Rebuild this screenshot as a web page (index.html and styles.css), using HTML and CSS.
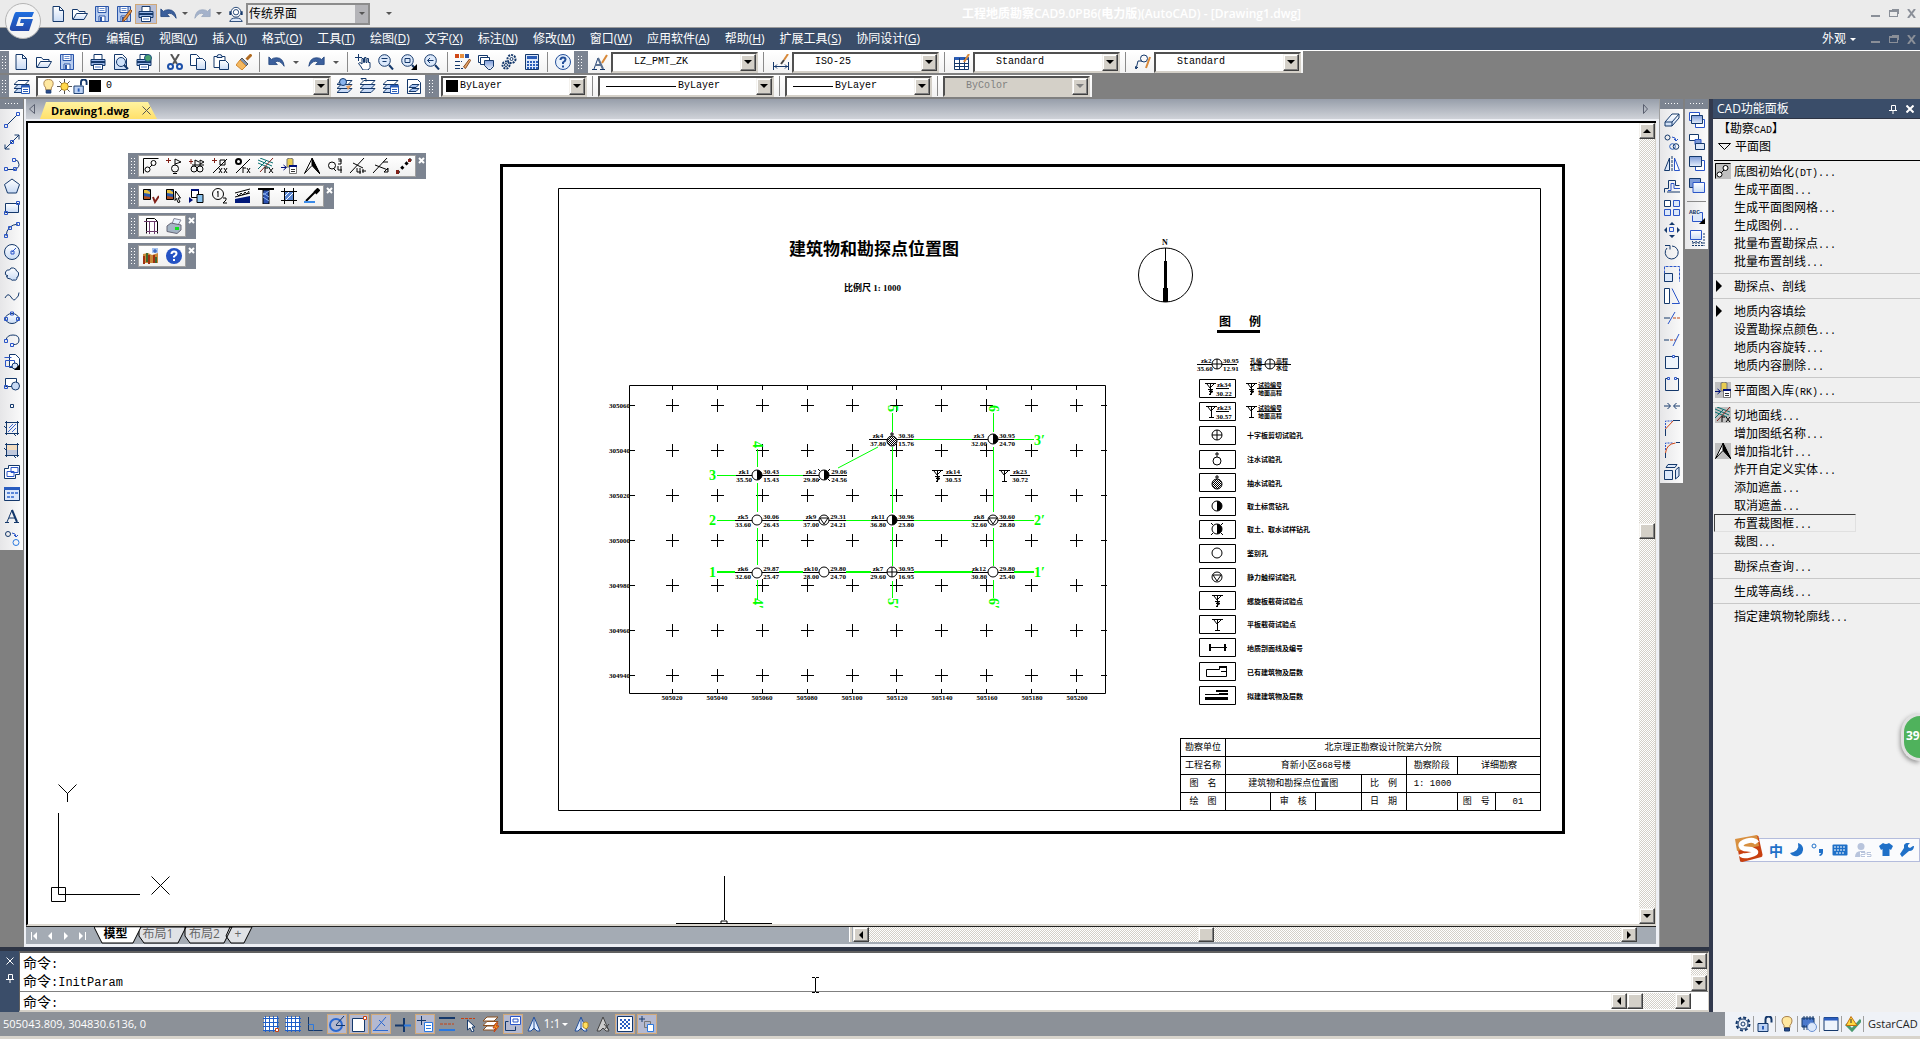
FILE: index.html
```html
<!DOCTYPE html>
<html lang="zh-CN">
<head>
<meta charset="utf-8">
<title>工程地质勘察CAD9.0PB6(电力版)(AutoCAD) - [Drawing1.dwg]</title>
<link rel="stylesheet" href="styles.css">
</head>
<body>
<svg class="defs" aria-hidden="true">
<defs>
<linearGradient id="lb" x1="0" y1="0" x2="0" y2="1"><stop offset="0" stop-color="#fff"/><stop offset="1" stop-color="#c9dbf5"/></linearGradient>
<linearGradient id="db" x1="0" y1="0" x2="0" y2="1"><stop offset="0" stop-color="#7d9bd8"/><stop offset="1" stop-color="#e8f0fc"/></linearGradient>
<linearGradient id="gg" x1="0" y1="0" x2="0" y2="1"><stop offset="0" stop-color="#1f6fe0"/><stop offset="1" stop-color="#2348a8"/></linearGradient>
<pattern id="hatch" width="2" height="2" patternUnits="userSpaceOnUse"><path d="M0 0h1v1h-1zM1 1h1v1h-1z" fill="#000" stroke="none"/></pattern>
</defs>
<!-- file and edit -->
<symbol id="new" viewBox="0 0 16 16"><path d="M3 .5h6.500l4 4v11h-10.500z" fill="url(#lb)"/><path d="M9.500 .5v4h4"/></symbol>
<symbol id="open" viewBox="0 0 16 16"><path d="M.5 13.500v-10h5l1.500 2h6v2" fill="#fff"/><path d="M1 13.500l3.500-6h11l-3.500 6z" fill="url(#lb)"/></symbol>
<symbol id="save" viewBox="0 0 16 16"><path d="M1.500 .5h13v15h-13z" fill="#b8cdf0" stroke="#2a55a8"/><path d="M4 .5h8v6h-8z" fill="#fff" stroke="#2a55a8"/><path d="M5.500 2.500h5M5.500 4.500h5" stroke="#6a8fd0"/><path d="M5 10h6v5.500h-6z" fill="#fff" stroke="#2a55a8"/><path d="M6 11h2v4h-2z" fill="#2a55a8" stroke="none"/></symbol>
<symbol id="saveas" viewBox="0 0 16 16"><use href="#save"/><path d="M14.500 3.500l-7 9-1 3 3-1.500 6.500-9z" fill="#e89a48" stroke="#8a4a20"/></symbol>
<symbol id="print" viewBox="0 0 16 16"><path d="M4 5.500v-5h8v5" fill="#fff"/><path d="M1 5.500h14v6h-14z" fill="#9ab6e6" /><path d="M1 8h14" stroke-width="2"/><path d="M3.500 10.500h9v5h-9z" fill="#fff"/><path d="M5 13h6" stroke="#4a78c8"/></symbol>
<symbol id="print2" viewBox="0 0 16 16"><use href="#print"/><circle cx="12" cy="4" r="3.500" fill="#48a070" stroke="#205080"/></symbol>
<symbol id="preview" viewBox="0 0 16 16"><path d="M1.500 .5h8l4 4v11h-12z" fill="url(#lb)"/><circle cx="8" cy="8" r="4.500" fill="#cfe2fa"/><path d="M11 11l4 4" stroke-width="2"/></symbol>
<symbol id="undo" viewBox="0 0 20 14"><path d="M1 1v9h10l-3-3q6-3 11 5q-1-10-9-10q-4 0-6 2z" fill="#3b5f9c" stroke="#24477f"/></symbol>
<symbol id="redo" viewBox="0 0 20 14"><path d="M19 1v9h-10l3-3q-6-3-11 5q1-10 9-10q4 0 6 2z" fill="#3b5f9c" stroke="#24477f"/></symbol>
<symbol id="user" viewBox="0 0 18 18"><circle cx="9" cy="7" r="5.500" fill="#fff"/><circle cx="9" cy="7" r="3" /><path d="M2 17.500q1-4 7-4t7 4z" fill="#dce8fa"/><path d="M2.500 6v4M15.500 6v4" stroke-width="2"/></symbol>
<symbol id="cut" viewBox="0 0 16 16"><path d="M4 0l6 10M12 0l-6 10" stroke="#555" stroke-width="2"/><circle cx="3.500" cy="12.500" r="2.500" stroke-width="2" stroke="#1c4fa8"/><circle cx="12.500" cy="12.500" r="2.500" stroke-width="2" stroke="#1c4fa8"/></symbol>
<symbol id="copy" viewBox="0 0 16 16"><path d="M.5 .5h6l3 3v8h-9z" fill="#fff"/><path d="M6.500 4.500h6l3 3v8h-9z" fill="url(#lb)"/></symbol>
<symbol id="paste" viewBox="0 0 16 16"><path d="M1 2.500h11v11h-11z" fill="#fff"/><path d="M4 2.500q0-2 2.500-2t2.500 2v1h-5z" fill="#dce8fa"/><path d="M6.500 6.500h6l3 3v6h-9z" fill="url(#lb)"/></symbol>
<symbol id="brush" viewBox="0 0 16 16"><path d="M15.500 .5l-5 5" stroke="#b06a20" stroke-width="3"/><path d="M6 4l6 6-2 2-6-6z" fill="#8090a8" stroke="#555"/><path d="M4 6l6 6-4 4-6-5z" fill="#f4b860" stroke="#d08830"/></symbol>
<symbol id="pan" viewBox="0 0 16 16"><path d="M3.500 0v7M0 3.500h7" stroke-width="1"/><path d="M5.500 12l-2-2.500 1.500-1 2 1.500v-5.500h1.500v4h1v-5h1.500v5h1v-4h1.500v4h1.500v5l-2 2.500h-5z" fill="#fff"/></symbol>
<symbol id="zoom" viewBox="0 0 16 16"><circle cx="6.500" cy="6.500" r="5.800" fill="#dce9fb"/><path d="M11 11l4 4.500" stroke-width="2"/></symbol>
<symbol id="zoomrt" viewBox="0 0 16 16"><use href="#zoom"/><path d="M3.500 4.500h6M4.500 7.500h4" /></symbol>
<symbol id="zoomwin" viewBox="0 0 16 16"><use href="#zoom"/><path d="M4 4.500h5v4h-5z"/><path d="M16 10v6h-6z" fill="#000" stroke="none"/></symbol>
<symbol id="zoomprev" viewBox="0 0 16 16"><use href="#zoom"/><path d="M9.500 6.500h-6M6 4l-2.500 2.500 2.500 2.500"/></symbol>
<symbol id="props" viewBox="0 0 16 16"><path d="M0 0h4v4h-4z" fill="#d04818" stroke="none"/><path d="M5 0h4v4h-4z" fill="#e89040" stroke="none"/><path d="M10 0h4v4h-4z" fill="#2850a0" stroke="none"/><path d="M0 7.500h7M0 11.500h6M0 14.500h8" stroke-dasharray="5 1"/><path d="M14.500 5l-6 8 2 1.500 5-8z" fill="#e8a868" stroke="#8a4a20"/></symbol>
<symbol id="sheets" viewBox="0 0 16 16"><path d="M.5 8.500v-7h9v7z" fill="#fff"/><path d="M2.500 10.500v-7h9v7z" fill="#fff"/><path d="M6.500 6.500h9v6l-3 3h-2l-4-4z" fill="url(#db)"/></symbol>
<symbol id="gears" viewBox="0 0 16 16"><circle cx="10.500" cy="5" r="4" stroke-width="2" stroke-dasharray="2 1"/><circle cx="10.500" cy="5" r="1.500"/><circle cx="5" cy="11" r="3.500" stroke-width="2" stroke-dasharray="2 1"/><circle cx="5" cy="11" r="1.500"/></symbol>
<symbol id="calc" viewBox="0 0 16 16"><path d="M1.500 .5h13v15h-13z" fill="#dce8fa"/><path d="M3 2h10v3h-10z" fill="#2a5db8" stroke="none"/><path d="M4 7v8M7 7v8M10 7v8M13 7v8" stroke-dasharray="2 1" stroke-width="2" stroke="#2a5db8"/></symbol>
<symbol id="help" viewBox="0 0 16 16"><circle cx="8" cy="8" r="7.500" fill="#e6f0fc" stroke="#24509a"/><path d="M5.500 6q0-2.500 2.500-2.500t2.500 2q0 1.500-2.500 3v1.500M8 11.500v2" stroke="#24509a" stroke-width="2"/></symbol>
<symbol id="styleA" viewBox="0 0 16 16"><path d="M2 15l4-11 5 11" stroke="#1c3f77"/><path d="M6 4l5 11M3 11h6" stroke="#5a7090" stroke-width="2"/><path d="M0 15.500h5M8 15.500h5"/><path d="M15 1l-5 8" stroke="#d88838" stroke-width="2"/></symbol>
<symbol id="styleD" viewBox="0 0 16 16"><path d="M.5 8v8M15.500 8v8M1 12.500h14M4 10.500l-2 2 2 2M12 10.500l2 2-2 2"/><path d="M15 0l-4 6" stroke="#d88838" stroke-width="2"/><path d="M11 6l-3 4" stroke="#444" stroke-width="2"/></symbol>
<symbol id="styleT" viewBox="0 0 16 16"><path d="M.5 3.500h14v12h-14z" fill="#fff"/><path d="M.5 4.500h14" stroke="#2a5db8" stroke-width="3"/><path d="M.5 9.500h14M.5 12.500h14M5.500 4v11M10.500 4v11"/><path d="M15 0l-5 8" stroke="#d88838" stroke-width="2"/></symbol>
<symbol id="styleM" viewBox="0 0 16 16"><path d="M1 15l2-8h4M1 15l-1-3M1 15l2-2"/><circle cx="9" cy="4.500" r="3.500"/><path d="M15 3l-4 11" stroke="#d88838" stroke-width="2"/></symbol>
<symbol id="layers" viewBox="0 0 16 16"><path d="M0 14.500l4-4h11l-4 4zM0 10.500l4-4h11l-4 4z" fill="#c8daf6"/><path d="M0 6.500l4-4h11l-4 4z" fill="#fff"/></symbol>
<symbol id="layermgr" viewBox="0 0 16 16"><use href="#layers"/><path d="M7.500 7.500h8v8h-8z" fill="#fff" stroke="#2a5db8"/><path d="M8 8.500h7" stroke="#2a5db8" stroke-width="2"/><path d="M9 11.500h5M9 13.500h5" stroke="#2a5db8"/></symbol>
<symbol id="layercur" viewBox="0 0 16 16"><use href="#layers"/><circle cx="6" cy="4" r="3.500" fill="#8ab4ee"/><path d="M9 8l6-1-4 5z" fill="#e8a060" stroke="none"/></symbol>
<symbol id="layerprev" viewBox="0 0 16 16"><use href="#layers"/><path d="M1 .5h5v3M1 .5l2 2"/></symbol>
<symbol id="layerstate" viewBox="0 0 16 16"><path d="M1.500 1.500h10l3 3v11h-13z" fill="#fff"/><path d="M3 9.500l3-3h7l-3 3zM3 13.500l3-3h7l-3 3z" fill="#a8c4f0"/></symbol>
<symbol id="bulb" viewBox="0 0 16 16"><path d="M8 .5q5 0 5 4.500 0 2-2 4.500v2h-6v-2q-2-2.500-2-4.500 0-4.500 5-4.500z" fill="#ffe8a0" stroke="#a8804a"/><path d="M5.500 12h5v3h-5z" fill="#2a4a90"/></symbol>
<symbol id="sun" viewBox="0 0 16 16"><path d="M8 0v16M0 8h16M2.500 2.500l11 11M13.500 2.500l-11 11" stroke="#444"/><circle cx="8" cy="8" r="4" fill="#ffd84a" stroke="#b88a20"/></symbol>
<symbol id="unlock" viewBox="0 0 16 16"><path d="M1 7.500h10v8h-10z" fill="#bcd2f4"/><path d="M8.500 7v-3.500q0-3 3-3t3 3v3" stroke-width="2"/><path d="M6 10v3.500" stroke-width="2" stroke="#2a5db8"/></symbol>
<!-- draw -->
<symbol id="d1" viewBox="0 0 16 16"><path d="M3 13l10-10"/><path d="M.5 12.500h3v3h-3zM12.500 .5h3v3h-3z" class="b"/></symbol>
<symbol id="d2" viewBox="0 0 16 16"><path d="M1 15l14-14M10.500 1h4.500v4.500M1 10.500v4.500h4.500"/><path d="M6.500 6.500h3v3h-3z" class="b"/></symbol>
<symbol id="d3" viewBox="0 0 16 16"><path d="M3 13.500h7q5-1 5-5t-4-5"/><path d="M.5 11.500h3v3h-3zM9.500 11.500h3v3h-3zM8.500 2.500h3v3h-3z" class="b"/></symbol>
<symbol id="d4" viewBox="0 0 16 16"><path d="M8 1l7.500 5.500-3 8.500h-9l-3-8.500z" fill="url(#lb)"/></symbol>
<symbol id="d5" viewBox="0 0 16 16"><path d="M1.500 3.500h13v9h-13z" fill="url(#lb)"/><path d="M.5 11.500h3v3h-3zM12.500 1.500h3v3h-3z" class="b"/></symbol>
<symbol id="d6" viewBox="0 0 16 16"><path d="M2 14q1-11 12-12"/><path d="M.5 12.500h3v3h-3zM4.500 4.500h3v3h-3zM12.500 .5h3v3h-3z" class="b"/></symbol>
<symbol id="d7" viewBox="0 0 16 16"><circle cx="8" cy="8" r="7.500" fill="url(#lb)"/><path d="M8 8l4-4M7 7h3v3h-3z" class="b"/></symbol>
<symbol id="d8" viewBox="0 0 16 16"><path d="M4 10q-4-1-2.500-4t4-2q1-3 4-2t3 3q3 1 2 4t-1.500 2q0 4-3 3-2 1-3.500-1-4 0-4-3z" fill="url(#lb)"/></symbol>
<symbol id="d9" viewBox="0 0 16 16"><path d="M1 10q3-6 6-1t5 1.500q3-2 3-6"/></symbol>
<symbol id="d10" viewBox="0 0 16 16"><ellipse cx="8" cy="8.500" rx="6.500" ry="5" fill="url(#lb)"/><path d="M.5 7.500h3v3h-3zM12.500 7.500h3v3h-3zM6.500 2h3v3h-3z" class="b"/></symbol>
<symbol id="d11" viewBox="0 0 16 16"><path d="M2 8q1-5 7-5t6 5-6 4.500"/><path d="M.5 7.500h3v3h-3zM6.500 11.500h3v3h-3z" class="b"/></symbol>
<symbol id="d12" viewBox="0 0 16 16"><path d="M5.500 .5h6l4 4v9h-10z" fill="#fff"/><path d="M1.500 6.500h9v6h-9z" class="b"/><circle cx="11" cy="12" r="3" fill="#dce8fa"/><path d="M.5 3.500h7" class="b"/><path d="M16 10v6h-6z" fill="#000" stroke="none"/></symbol>
<symbol id="d13" viewBox="0 0 16 16"><path d="M1.500 2.500h11v8h-11z" fill="#fff"/><circle cx="11.500" cy="10" r="4" fill="#c9dbf5"/><path d="M.5 9.500h3v3h-3z" class="b"/></symbol>
<symbol id="d14" viewBox="0 0 16 16"><path d="M6.500 6.500h3v3h-3z" fill="#fff"/></symbol>
<symbol id="d15" viewBox="0 0 16 16"><path d="M2.500 1v14M13.500 1v14M1 2.500h14M1 13.500h14M0 6l3 3M9 13l3 3"/><path d="M5 8l4-4M4 12l8-8M8 12l4-4" stroke="#3a66d0"/></symbol>
<symbol id="d16" viewBox="0 0 16 16"><path d="M3 3h10v5h-10z" fill="#f2dcc0" stroke="none"/><path d="M3 8h10v5h-10z" fill="#c0c8dc" stroke="none"/><path d="M2.500 1v14M13.500 1v14M1 2.500h14M1 13.500h14M0 6l3 3M9 13l3 3"/></symbol>
<symbol id="d17" viewBox="0 0 16 16"><path d="M.5 4.500h4v-3h11v9h-4v4h-11z" fill="#fff"/><path d="M3 7.500h7v5h-7zM7 3.500h7v5h-7z" class="b"/></symbol>
<symbol id="d18" viewBox="0 0 16 16"><path d="M.5 1.500h15v13h-15z" fill="#dce8fa"/><path d="M0 2.500h16" stroke="#2a5dc0" stroke-width="3"/><path d="M3 6h3v2h-3zM7 6h3v2h-3zM11 6h3v2h-3zM3 10h3v2h-3zM7 10h3v2h-3z" fill="#5a86d8" stroke="none"/></symbol>
<symbol id="d19" viewBox="0 0 16 16"><path d="M3 14l5-12"/><path d="M8 2l5 12" stroke-width="2"/><path d="M5 10h6M1 14.500h4M10 14.500h5"/></symbol>
<symbol id="d20" viewBox="0 0 16 16"><circle cx="4" cy="4" r="2.500"/><circle cx="12" cy="12.500" r="3" stroke="#2a7ae0"/><path d="M8 3q4 0 4 4M10 5l2 2 2-2" class="b"/></symbol>
<!-- modify -->
<symbol id="m1" viewBox="0 0 16 16"><path d="M1 10l7-8h7v4l-7 8h-7z" fill="url(#lb)"/><path d="M1 10h7l7-8M8 10v4"/></symbol>
<symbol id="m2" viewBox="0 0 16 16"><circle cx="3.500" cy="3.500" r="2.500"/><circle cx="8.500" cy="12.500" r="2.800" stroke="#2a5db8"/><circle cx="12" cy="12.500" r="2.800"/><path d="M8 3q4 0 4 4M10 5l2 2 2-2" class="b"/></symbol>
<symbol id="m3" viewBox="0 0 16 16"><path d="M5.500 2v12.500h-5z" fill="#dce8fa"/><path d="M10.500 2v12.500h5z" fill="#fff" class="b"/><path d="M8 0v16" stroke-dasharray="3 1"/></symbol>
<symbol id="m4" viewBox="0 0 16 16"><path d="M.5 14.500v-4h4v-8h7v5h4M3 14h13" /><path d="M4 12.500h3v-7h3v5h6" class="b"/></symbol>
<symbol id="m5" viewBox="0 0 16 16"><path d="M.5 .5h6v6h-6z" fill="#fff"/><path d="M9.500 .5h6v6h-6zM.5 9.500h6v6h-6zM9.500 9.500h6v6h-6z" fill="#dce8fa" class="b"/></symbol>
<symbol id="m6" viewBox="0 0 16 16"><path d="M5.500 5.500h4v4h-4z" class="b"/><path d="M8 0l3 3h-6zM8 16l3-3h-6zM0 8l3-3v6zM16 8l-3-3v6z" fill="#14386b" stroke="none"/></symbol>
<symbol id="m7" viewBox="0 0 16 16"><path d="M3 4a6.500 6.500 0 1 0 5-2"/><path d="M1 1.500h5v4"/></symbol>
<symbol id="m8" viewBox="0 0 16 16"><path d="M.5 15.500v-15h15v15" class="b" stroke-dasharray="3 1"/><path d="M.5 7.500h8v8h-8z" fill="#dce8fa"/></symbol>
<symbol id="m9" viewBox="0 0 16 16"><path d="M.5 .5h5v15h-5z" fill="#fff"/><path d="M8 .5l7.500 15h-7.500" class="b"/></symbol>
<symbol id="m10" viewBox="0 0 16 16"><path d="M0 8h6"/><path d="M9 8h7" stroke="#c04818" stroke-dasharray="3 1"/><path d="M4 14l7-12" class="b"/></symbol>
<symbol id="m11" viewBox="0 0 16 16"><path d="M0 8h5"/><path d="M6 8h6" stroke="#c04818" stroke-dasharray="3 1"/><path d="M9 14l6-12" class="b"/></symbol>
<symbol id="m12" viewBox="0 0 16 16"><path d="M1.500 2.500h13v12h-13z" fill="#eef4fc"/><path d="M8.500 1.500h2v2h-2z" fill="#fff" class="b"/></symbol>
<symbol id="m13" viewBox="0 0 16 16"><path d="M4 2.500h-2.500v12h13v-12h-2.500"/><path d="M3.500 1.500h2v2h-2zM10.500 1.500h2v2h-2z" class="b"/></symbol>
<symbol id="m14" viewBox="0 0 16 16"><path d="M0 8h6M3.500 5l3 3-3 3M16 8h-6M12.500 5l-3 3 3 3"/></symbol>
<symbol id="m15" viewBox="0 0 16 16"><path d="M1.500 8v-7h7" class="b" stroke-dasharray="2 1"/><path d="M1.500 16v-7M9 .5h7"/><path d="M1.500 9l7.500-8" stroke="#d04818"/></symbol>
<symbol id="m16" viewBox="0 0 16 16"><path d="M1.500 8v-7h7" class="b" stroke-dasharray="2 1"/><path d="M1.500 16v-5M12 .5h4"/><path d="M1.500 11q1-9 10-10" stroke="#d04818"/></symbol>
<symbol id="m17" viewBox="0 0 16 16"><path d="M.5 6.500h8v9h-8zM2 3.500l2-3h9l-2 3zM11.500 6l3.500-3v9l-3.500 3z" fill="#dce8fa"/></symbol>
<symbol id="o1" viewBox="0 0 16 16"><path d="M.5 .5h10v8h-10zM6.500 7.500h9v8h-9z" fill="#fff" class="b"/><path d="M2.500 3.500h11v8h-11z" fill="url(#db)"/></symbol>
<symbol id="o2" viewBox="0 0 16 16"><path d="M.5 .5h9v6h-9z" fill="#fff"/><path d="M6 5.500h6v5h-6z" fill="#7d9bd8" class="b"/><path d="M6.500 9.500h9v6h-9z" fill="#dce8fa"/></symbol>
<symbol id="o3" viewBox="0 0 16 16"><path d="M6.500 4.500h9v10h-9z" fill="#fff" class="b"/><path d="M.5 .5h12v10h-12z" fill="url(#db)"/></symbol>
<symbol id="o4" viewBox="0 0 16 16"><path d="M.5 .5h11v9h-11z" fill="#7d9bd8"/><path d="M4 4.500h11.500v10h-11.500z" fill="url(#lb)" class="b"/></symbol>
<symbol id="o6" viewBox="0 0 16 16"><path d="M1.500 .5h11v9h-11z" fill="url(#lb)" class="b"/><path d="M15 3v13M3 13h12M3 11l2 2 2-2 2 2 2-2 2 2M3 15.500h12" stroke-dasharray="2 1"/></symbol>
<!-- geology tools -->
<symbol id="g1" viewBox="0 0 16 16"><path d="M.5 15.500v-15h15M3 13l10-10" stroke="#000"/><circle cx="4.500" cy="11.500" r="2.500" stroke="#000" fill="#fff"/><circle cx="10.500" cy="5" r="2.500" stroke="#000" fill="#fff"/></symbol>
<symbol id="g2" viewBox="0 0 16 16"><path d="M0 2.500h5M2.500 0v5" stroke="#802018"/><circle cx="9" cy="10.500" r="3.500" stroke="#000"/><path d="M9 7v-6l6 3-6 2M7 15.500h4" stroke="#000"/></symbol>
<symbol id="g3" viewBox="0 0 16 16"><path d="M0 3.500h4M2 1v5" stroke="#802018"/><circle cx="5" cy="11" r="3" stroke="#000"/><circle cx="11" cy="11" r="3" stroke="#000"/><path d="M6 8v-6l4 2M11 8v-6l4 2-4 2M3 7h12" stroke="#000"/></symbol>
<symbol id="g4" viewBox="0 0 16 16"><path d="M0 2.500h5M2.500 0v5" stroke="#802018"/><path d="M1 15l14-14M8 2h5v5h-5zM7 10l3 5M10 10l-3 5M12 10l3 5M15 10l-3 5" stroke="#000"/></symbol>
<symbol id="g5" viewBox="0 0 16 16"><circle cx="3.500" cy="3.500" r="2.500" stroke="#000" stroke-width="2"/><path d="M1 15l14-14M8 9v6M8 10h3M12 10l3 5M15 10l-3 5" stroke="#000"/></symbol>
<symbol id="g6" viewBox="0 0 16 16"><path d="M0 2l14 6M0 5l12 5M2 0l13 5M0 11l8-8" stroke="#0a7070"/><path d="M2 14l13-14" stroke="#802018"/><path d="M7 9v6M7 10h3M11 10l4 5M15 10l-4 5" stroke="#000"/></symbol>
<symbol id="g7" viewBox="0 0 16 16"><path d="M0 9.500h5M2.500 7l3 2.500-3 2.500" stroke="#00107a"/><path d="M6 1q3-2 6 0v8h-6z" fill="#e8cc50" stroke="#777"/><path d="M8.500 7.500h7v8h-7z" fill="#fff" stroke="#777"/><path d="M8 8h8" stroke="#00107a" stroke-width="2"/><path d="M10 11.500h4M10 13.500h4" stroke="#333"/></symbol>
<symbol id="g8" viewBox="0 0 16 16"><path d="M8 .5l-7.500 15 7.500-8 7.500 8z" fill="#fff" stroke="#000"/><path d="M8 0l8 16-8-9z" fill="#000" stroke="#000"/></symbol>
<symbol id="g9" viewBox="0 0 16 16"><circle cx="5" cy="7.500" r="3.500" stroke="#000"/><path d="M6 10l3 3M11 1h3v5h-3M11.500 3h3M11 8v4h4M14 8v7" stroke="#000"/></symbol>
<symbol id="g10" viewBox="0 0 16 16"><path d="M0 15l14-15M3 5l10 5M7 10v4h4M10 10v6M13 11v4M16 13h-4" stroke="#000"/></symbol>
<symbol id="g11" viewBox="0 0 16 16"><path d="M0 15l14-15M2 7l13 5M15 4h-5M11 14l4-4v4z" stroke="#000"/></symbol>
<symbol id="g12" viewBox="0 0 16 16"><path d="M1 15l14-14" stroke="#000" stroke-width="3" stroke-dasharray="3 3"/><path d="M0 12h3v4h-3zM12 1h3v3h-3z" fill="#802018" stroke="none"/></symbol>
<symbol id="g13" viewBox="0 0 16 16"><path d="M.5 1.500h7v10h-7z" fill="#2a5ab0" stroke="#000"/><path d="M1 2h3l3 2v2l-6-1z" fill="#e8c040" stroke="none"/><path d="M1 8l6 1v2h-6z" fill="#b05020" stroke="none"/><path d="M10 9l2 5 4-6" stroke="#802018" stroke-width="2"/></symbol>
<symbol id="g14" viewBox="0 0 16 16"><path d="M.5 1.500h7v10h-7z" fill="#2a5ab0" stroke="#000"/><path d="M1 2h3l3 2v2l-6-1z" fill="#e8c040" stroke="none"/><path d="M1 8l6 1v2h-6z" fill="#b05020" stroke="none"/><path d="M9.500 3l5 7h-2.500l2 4-2 .5-1.500-4-1.500 2z" fill="#fff" stroke="#000"/></symbol>
<symbol id="g15" viewBox="0 0 16 16"><path d="M2.500 1.500h7v8h-7z" fill="#fff" stroke="#000"/><path d="M2 2h8" stroke="#00107a" stroke-width="2"/><path d="M8 6.500h6v8h-6z" fill="#8ac4f0" stroke="#000"/><path d="M0 9l4 3-4 3z" fill="#00107a" stroke="none"/></symbol>
<symbol id="g16" viewBox="0 0 16 16"><circle cx="6" cy="6" r="5.500" stroke="#000"/><path d="M6 3v6M5 4h1M11 10h3v2l-3 3h4" stroke="#000"/></symbol>
<symbol id="g17" viewBox="0 0 16 16"><path d="M0 11l15-3v7h-15z" fill="#00187a" stroke="none"/><path d="M0 5l15-4M0 9l15-4M2 6l2 2 2-3 2 2 2-3 2 2 2-3" stroke="#000"/></symbol>
<symbol id="g18" viewBox="0 0 16 16"><path d="M0 1h16" stroke="#000" stroke-width="2"/><path d="M5 2h6v14h-6z" fill="#2a50b0" stroke="#000"/><path d="M5 5l6 4M5 9l6 4M11 3l-6 4" stroke="#8ab4f0"/></symbol>
<symbol id="g19" viewBox="0 0 16 16"><path d="M3 3h10v10h-10z" fill="#5a86d0" stroke="none"/><path d="M3.500 0v16M12.500 0v16M0 3.500h16M0 12.500h16" stroke="#000"/><path d="M5 12l7-7M4 8l4-4" stroke="#fff"/></symbol>
<symbol id="g20" viewBox="0 0 16 16"><path d="M15 1l-4 4" stroke="#000" stroke-width="4"/><path d="M11 4l-9 9" stroke="#000" stroke-width="2"/><path d="M0 14h11" stroke="#3a8ae8" stroke-width="2"/></symbol>
<symbol id="g21" viewBox="0 0 16 16"><path d="M3.500 15.500v-15h8l3 3v12" fill="#fff" stroke="#000"/><path d="M6.500 3v13M11.500 3v13M1 3.500h13M3 13.500h12" stroke="#6a3a6a"/></symbol>
<symbol id="g22" viewBox="0 0 16 16"><path d="M6 6l2-5.500 7 1.500-3 5z" fill="#e4f0fc" stroke="#889"/><path d="M1 8l4-3 10 2v5l-4 3.500-10-2z" fill="#a4b4c4" stroke="#667"/><path d="M9 9h4v3h-4z" fill="#10e020" stroke="none"/></symbol>
<symbol id="g23" viewBox="0 0 16 16"><path d="M0 6l5-1 4 2 6-2v10h-15z" fill="#c88838" stroke="none"/><path d="M1 8v8M6 7v9M11 7v8" stroke="#a03010" stroke-width="2"/><path d="M4 5v9M13 9v6" stroke="#406830" stroke-width="2"/><path d="M9 0h6v5h-6z" fill="#a8c4f0" stroke="none"/><path d="M12 1v4M10 3h4" stroke="#2050b0"/></symbol>
<symbol id="g24" viewBox="0 0 16 16"><circle cx="8" cy="8" r="8" fill="#2452c4" stroke="none"/><path d="M5.500 6q0-2.500 2.500-2.500t2.500 2q0 1.500-2.500 3v1M8 11v2" stroke="#fff" stroke-width="2"/></symbol>
<!-- status -->
<symbol id="s1" viewBox="0 0 16 16"><path d="M1 1h14v14h-14z" fill="#fff" stroke="none"/><path d="M2.500 0v16M6.500 0v16M10.500 0v16M14.500 0v16M0 2.500h16M0 6.500h16M0 10.500h16M0 14.500h16" stroke="#1f5fc8"/></symbol>
<symbol id="s1b" viewBox="0 0 16 16"><use href="#s1"/><path d="M12.500 12.500h3v3h-3z" fill="#fff" stroke="#c84010"/></symbol>
<symbol id="s2" viewBox="0 0 16 16"><path d="M1.500 1v13.500h14"/><path d="M1.500 8.500h5v6" stroke="#2a78e0"/></symbol>
<symbol id="s3" viewBox="0 0 16 16"><circle cx="7" cy="9" r="6" stroke="#2a68d0" stroke-width="2"/><path d="M7 9.500h9M7 9l8-9"/></symbol>
<symbol id="s4" viewBox="0 0 16 16"><path d="M1.500 2.500h12v13h-12z" fill="#fff"/><path d="M12.500 .5h3v3h-3z" fill="#fff" stroke="#c84010"/></symbol>
<symbol id="s5" viewBox="0 0 16 16"><path d="M1 15l12-14M0 14.500h15M6 4l6 6" stroke="#2a68d0"/></symbol>
<symbol id="s6" viewBox="0 0 16 16"><path d="M9 2v14M0 9.500h9" stroke-width="2"/><path d="M9 9.500h7" stroke="#2a78e0" stroke-width="2"/></symbol>
<symbol id="s7" viewBox="0 0 16 16"><path d="M4.500 0v9M0 4.500h9"/><path d="M7.500 6.500h8v9h-8z" fill="#fff" stroke="#2a78e0"/><path d="M9 9.500h5M9 12.500h5" stroke="#2a78e0"/></symbol>
<symbol id="s8" viewBox="0 0 16 16"><path d="M0 2h16" stroke-width="2"/><path d="M1 8h14" stroke="#c84010" stroke-dasharray="3 1"/><path d="M0 14h16" stroke="#2a78e0" stroke-width="2"/></symbol>
<symbol id="s9" viewBox="0 0 16 16"><path d="M0 2.500h14" stroke="#c84010" stroke-dasharray="3 1"/><path d="M6.500 4v10l2.500-2 2 4 2-1-2-4h3z" fill="#fff"/></symbol>
<symbol id="s10" viewBox="0 0 16 16"><path d="M0 14l4-4h11l-4 4zM0 9.500l4-4h11l-4 4zM0 5l4-4h11l-4 4z" fill="#fff" stroke="#8a5020"/><path d="M13 7l-3 5h3l-2 4 5-6h-3l2-3z" fill="#f0a020" stroke="#c84010"/></symbol>
<symbol id="s11" viewBox="0 0 16 16"><path d="M5.500 .5h10v8h-10z" fill="#fff" class="b"/><path d="M8 3h5v3h-5z" class="b"/><path d="M3.500 5.500h-3v9h10v-4"/></symbol>
<symbol id="s12" viewBox="0 0 16 16"><path d="M8 1l-6 14h3l3-3 3 3h3z" fill="#e0ecff" stroke="#24509a"/><path d="M8 2v12" stroke="#24509a"/></symbol>
<symbol id="s13" viewBox="0 0 16 16"><use href="#s12"/><path d="M10 7q3-2 5 0v4l-2 2-3-2z" fill="#ffe060" stroke="#b88a20"/></symbol>
<symbol id="s14" viewBox="0 0 16 16"><path d="M8 1l-6 14h3l3-3 3 3h3z" fill="#ccc" stroke="#444"/><path d="M9 8l5 6M14 8l-5 6" stroke="#444"/></symbol>
<symbol id="s15" viewBox="0 0 16 16"><path d="M.5 .5h15v15h-15z" fill="#fff"/><path d="M3 4h10M3 8h10M3 12h10" stroke="#2a5dc0" stroke-width="2" stroke-dasharray="2 2"/><path d="M5 6h8M5 10h8" stroke="#2a5dc0" stroke-width="2" stroke-dasharray="2 2"/></symbol>
<symbol id="s16" viewBox="0 0 16 16"><path d="M3 0v6M0 3h6"/><path d="M5.500 5.500h6v6h-6z" stroke="#777"/><path d="M8.500 8.500h6v7h-6z" fill="#fff" stroke="#2a78e0"/></symbol>
<symbol id="t1" viewBox="0 0 16 16"><circle cx="8" cy="8" r="6.500" stroke-dasharray="3 2" stroke-width="2"/><circle cx="8" cy="8" r="5" fill="#eff2f7"/><circle cx="8" cy="8" r="2"/></symbol>
<symbol id="t4" viewBox="0 0 16 16"><path d="M1 2h12v9h-12z" fill="#4a78cc"/><path d="M3 0v4M6 0v4M9 0v4M12 0v4M3 9v5M6 9v5"/><circle cx="11" cy="11" r="4.500" fill="#dce8fa" stroke="#6a8fd0"/></symbol>
<symbol id="t5" viewBox="0 0 16 16"><path d="M1 1.500h14v13h-14z" fill="#eef4fc"/><path d="M1 3h14" stroke="#2a5dc0" stroke-width="3"/></symbol>
<symbol id="t6" viewBox="0 0 16 16"><path d="M1 8l6 6 9-10" stroke="#4a9a70" stroke-width="3"/><path d="M6 .5l6 9h-11z" fill="#ffd840" stroke="#c07010"/><path d="M6 3v4" stroke="#333"/></symbol>
<!-- sheet symbols centred on the origin -->
<g id="hole"><circle r="5" fill="#fff" stroke="#000"/></g>
<g id="half"><circle r="5" fill="#fff" stroke="#000"/><path d="M0-5a5 5 0 0 1 0 10z" fill="#000" stroke="none"/></g>
<g id="tri"><circle r="5" fill="#fff" stroke="#000"/><path d="M-4-2h8l-4 6z" stroke="#000"/></g>
<g id="vane"><circle r="5" fill="#fff" stroke="#000"/><path d="M-5 0h10M0-5v10" stroke="#000"/></g>
<g id="pump"><circle r="5" fill="#fff" stroke="none"/><circle r="5" fill="url(#hatch)" stroke="#000"/><path d="M0-5v-4M-2-7h4" stroke="#000"/></g>
<g id="inject"><circle r="4" fill="#fff" stroke="#000"/><path d="M0-4v-5M-2-7h4" stroke="#000"/></g>
<g id="water"><use href="#half"/><path d="M-6-6l2 2M6-6l-2 2M-6 6l2-2M6 6l-2-2" stroke="#000"/></g>
<g id="plate"><path d="M-5-5.500h11M-3-5l3 4 4-4M.5-5v10M-2 5.500h5" stroke="#000"/></g>
<g id="screw"><path d="M-5-5.500h11M-3-5l3 4 4-4M.5-5v10M-2 .5h5l-4 2h4l-4 3h2" stroke="#000"/></g>
</svg>

<header class="titlebar">
 <div class="logo" aria-hidden="true"><svg width="36" height="36" viewBox="0 0 36 36"><circle cx="18" cy="18" r="17.500" fill="#f4f4f4" stroke="#b4b4b4"/><path d="M11 9h18l-2 5h-13l-3 9h7l1-3h-4l1-4h12l-4 12h-16q-4 0-3-4l4-12q1-3 2-3z" fill="url(#gg)"/></svg></div>
 <div class="quick">
  <button aria-label="新建"><svg class="i"><use href="#new"/></svg></button><button aria-label="打开"><svg class="i"><use href="#open"/></svg></button><button aria-label="保存"><svg class="i"><use href="#save"/></svg></button><button aria-label="另存为"><svg class="i"><use href="#saveas"/></svg></button><button class="hot" aria-label="打印"><svg class="i"><use href="#print"/></svg></button><button aria-label="放弃"><svg class="i sm"><use href="#undo"/></svg></button><button class="dd" aria-label="放弃列表"></button><button aria-label="重做"><svg class="i sm dim"><use href="#redo"/></svg></button><button class="dd" aria-label="重做列表"></button><button aria-label="用户"><svg class="i"><use href="#user"/></svg></button>
 </div>
 <label class="scheme"><select aria-label="工作空间"><option>传统界面</option></select><span class="flatdd"></span></label>
 <button class="dd more" aria-label="自定义"></button>
 <h1>工程地质勘察CAD9.0PB6(电力版)(AutoCAD) - [Drawing1.dwg]</h1>
 <div class="winbtns"><button class="min" aria-label="最小化"></button><button class="max" aria-label="还原"></button><button class="cls" aria-label="关闭"><svg width="9" height="9"><path d="M1 0l7 9M8 0l-7 9"/></svg></button></div>
</header>

<nav class="menubar">
 <a href="#">文件(<u>F</u>)</a><a href="#">编辑(<u>E</u>)</a><a href="#">视图(<u>V</u>)</a><a href="#">插入(<u>I</u>)</a><a href="#">格式(<u>O</u>)</a><a href="#">工具(<u>T</u>)</a><a href="#">绘图(<u>D</u>)</a><a href="#">文字(<u>X</u>)</a><a href="#">标注(<u>N</u>)</a><a href="#">修改(<u>M</u>)</a><a href="#">窗口(<u>W</u>)</a><a href="#">应用软件(<u>A</u>)</a><a href="#">帮助(<u>H</u>)</a><a href="#">扩展工具(<u>S</u>)</a><a href="#">协同设计(<u>G</u>)</a>
 <a class="look" href="#">外观<span class="vee"></span></a>
 <div class="winbtns"><button class="min" aria-label="最小化图形"></button><button class="max" aria-label="还原图形"></button><button class="cls" aria-label="关闭图形"><svg width="9" height="9"><path d="M1 0l7 9M8 0l-7 9"/></svg></button></div>
</nav>

<div class="toolbars">
 <div class="bar">
  <i class="grip"></i><button><svg class="i"><use href="#new"/></svg></button><button><svg class="i"><use href="#open"/></svg></button><button><svg class="i"><use href="#save"/></svg></button><i class="sep"></i><button><svg class="i"><use href="#print"/></svg></button><button><svg class="i"><use href="#preview"/></svg></button><button><svg class="i"><use href="#print2"/></svg></button><i class="sep"></i><button><svg class="i"><use href="#cut"/></svg></button><button><svg class="i"><use href="#copy"/></svg></button><button><svg class="i"><use href="#paste"/></svg></button><button><svg class="i"><use href="#brush"/></svg></button><i class="sep"></i><button class="w26"><svg class="i sm"><use href="#undo"/></svg></button><button class="dd"></button><button class="w26"><svg class="i sm"><use href="#redo"/></svg></button><button class="dd"></button><i class="sep"></i><button><svg class="i"><use href="#pan"/></svg></button><button><svg class="i"><use href="#zoomrt"/></svg></button><button><svg class="i"><use href="#zoomwin"/></svg></button><button><svg class="i"><use href="#zoomprev"/></svg></button><i class="sep"></i><button><svg class="i"><use href="#props"/></svg></button><button><svg class="i"><use href="#sheets"/></svg></button><button><svg class="i"><use href="#gears"/></svg></button><button><svg class="i"><use href="#calc"/></svg></button><i class="sep"></i><button><svg class="i"><use href="#help"/></svg></button>
  <i class="grip wide"></i><button><svg class="i"><use href="#styleA"/></svg></button><label class="combo in"><select aria-label="文字样式"><option>LZ_PMT_ZK</option></select><span class="arrow"></span></label>
  <i class="sep wide"></i><button><svg class="i"><use href="#styleD"/></svg></button><label class="combo in"><select aria-label="标注样式"><option>ISO-25</option></select><span class="arrow"></span></label>
  <i class="sep wide"></i><button><svg class="i"><use href="#styleT"/></svg></button><label class="combo in"><select aria-label="表格样式"><option>Standard</option></select><span class="arrow"></span></label>
  <i class="sep wide"></i><button><svg class="i"><use href="#styleM"/></svg></button><label class="combo in"><select aria-label="引线样式"><option>Standard</option></select><span class="arrow"></span></label>
 </div>
 <div class="bar">
  <i class="grip"></i><button class="w26"><svg class="i"><use href="#layermgr"/></svg></button>
  <label class="combo layer"><svg class="i"><use href="#bulb"/></svg><svg class="i"><use href="#sun"/></svg><svg class="i"><use href="#unlock"/></svg><i class="sw"></i><select aria-label="图层"><option>0</option></select><span class="arrow"></span></label>
  <button><svg class="i"><use href="#layercur"/></svg></button><button><svg class="i"><use href="#layerprev"/></svg></button><button><svg class="i"><use href="#layermgr"/></svg></button><button><svg class="i"><use href="#layerstate"/></svg></button>
  <i class="grip wide"></i><label class="combo color"><i class="sw"></i><select aria-label="颜色"><option>ByLayer</option></select><span class="arrow"></span></label>
  <i class="sep wide"></i><label class="combo ltype"><i class="rule"></i><select aria-label="线型"><option>ByLayer</option></select><span class="arrow"></span></label>
  <i class="sep wide"></i><label class="combo"><i class="rule short"></i><select aria-label="线宽"><option>ByLayer</option></select><span class="arrow"></span></label>
  <i class="sep wide"></i><label class="combo in off"><select aria-label="打印样式" disabled><option>ByColor</option></select><span class="arrow"></span></label>
 </div>
</div>

<div class="workspace">
 <div class="left">
  <div class="stage">
   <div class="vtool draw"><i class="vgrip"></i><button><svg class="i"><use href="#d1"/></svg></button><button><svg class="i"><use href="#d2"/></svg></button><button><svg class="i"><use href="#d3"/></svg></button><button><svg class="i"><use href="#d4"/></svg></button><button><svg class="i"><use href="#d5"/></svg></button><button><svg class="i"><use href="#d6"/></svg></button><button><svg class="i"><use href="#d7"/></svg></button><button><svg class="i"><use href="#d8"/></svg></button><button><svg class="i"><use href="#d9"/></svg></button><button><svg class="i"><use href="#d10"/></svg></button><button><svg class="i"><use href="#d11"/></svg></button><button><svg class="i"><use href="#d12"/></svg></button><button><svg class="i"><use href="#d13"/></svg></button><button><svg class="i"><use href="#d14"/></svg></button><button><svg class="i"><use href="#d15"/></svg></button><button><svg class="i"><use href="#d16"/></svg></button><button><svg class="i"><use href="#d17"/></svg></button><button><svg class="i"><use href="#d18"/></svg></button><button><svg class="i"><use href="#d19"/></svg></button><button><svg class="i"><use href="#d20"/></svg></button></div>
   <main class="doc">
    <div class="tabbar">
     <button class="tri" aria-label="上一个"><svg width="6" height="10"><path d="M5.500 .5v9l-5-4.500z"/></svg></button>
     <div class="tab"><a href="#">Drawing1.dwg</a><button aria-label="关闭文件"><svg width="9" height="9"><path d="M.5 .5l8 8M8.500 .5l-8 8"/></svg></button></div>
     <button class="tri end" aria-label="下一个"><svg width="6" height="10"><path d="M.5 .5v9l4-4.500z"/></svg></button>
    </div>
    <div class="view">
     <div class="canvas">
      <svg class="model" role="img" aria-label="建筑物和勘探点位置图">
       <g transform="translate(-28 -123)" fill="none" stroke="#000">
        <path d="M501.500 165.500h1062v667h-1062z" stroke-width="3"/>
        <path d="M558.500 188.500h982v622h-982z"/>
        <g class="t">
         <text x="789" y="255" class="h1">建筑物和勘探点位置图</text>
         <text x="844" y="291" class="h2">比例尺 1: 1000</text>
         <text x="1165" y="245" class="n" text-anchor="middle">N</text>
         <text x="1219" y="326" class="h3">图</text><text x="1249" y="326" class="h3">例</text>
        </g>
        <circle cx="1165.500" cy="275" r="27"/><path d="M1165.500 248v14"/><path d="M1165.500 261v41" stroke-width="3"/><path d="M1165.500 288v14" stroke-width="5"/>
        <path d="M1217 331.500h43" stroke-width="3"/>
        <!-- coordinate grid -->
        <path d="M629.500 385.500h476v308h-476z"/>
        <g id="cross"><path d="M666 405.500h13M672.500 399v13M666 450.500h13M672.500 444v13M666 495.500h13M672.500 489v13M666 540.500h13M672.500 534v13M666 585.500h13M672.500 579v13M666 630.500h13M672.500 624v13M666 675.500h13M672.500 669v13M672.500 385v5M672.500 689v5"/></g>
        <use href="#cross" x="45"/><use href="#cross" x="90"/><use href="#cross" x="135"/><use href="#cross" x="180"/><use href="#cross" x="224"/><use href="#cross" x="269"/><use href="#cross" x="314"/><use href="#cross" x="359"/><use href="#cross" x="404"/>
        <path d="M629 405.500h6M629 450.500h6M629 495.500h6M629 540.500h6M629 585.500h6M629 630.500h6M629 675.500h6M1101 405.500h6M1101 450.500h6M1101 495.500h6M1101 540.500h6M1101 585.500h6M1101 630.500h6M1101 675.500h6"/>
        <g class="t coord" text-anchor="end"><text x="630" y="408">305060</text><text x="630" y="453">305040</text><text x="630" y="498">305020</text><text x="630" y="543">305000</text><text x="630" y="588">304980</text><text x="630" y="633">304960</text><text x="630" y="678">304940</text></g>
        <g class="t coord" text-anchor="middle"><text x="672" y="700">505020</text><text x="717" y="700">505040</text><text x="762" y="700">505060</text><text x="807" y="700">505080</text><text x="852" y="700">505100</text><text x="897" y="700">505120</text><text x="942" y="700">505140</text><text x="987" y="700">505160</text><text x="1032" y="700">505180</text><text x="1077" y="700">505200</text></g>
        <!-- section lines -->
        <g stroke="#0f0">
         <path d="M717 475.500h19M779 475.500h24M838 468l40-21M913 439.500h60M1014 439.500h20M717 520.500h18M779 520.500h24M846 520.500h25M914 520.500h59M1014 520.500h20"/>
         <path d="M717 572h18M779 572h24M846 572h25M914 572h59M1014 572h20" stroke-width="2"/>
         <path d="M757.500 449v18M757.500 483v29M757.500 528v37M757.500 580v20M892.500 413v19M892.500 447v66M892.500 527v39M892.500 581v17M993.500 413v19M993.500 447v65M993.500 528v38M993.500 580v18"/>
        </g>
        <g class="t sec"><text x="709" y="480">3</text><text x="709" y="525">2</text><text x="709" y="577">1</text><text x="1034" y="445">3′</text><text x="1034" y="525">2′</text><text x="1034" y="577">1′</text>
         <text transform="translate(753 441) rotate(90)">4</text><text transform="translate(888 405) rotate(90)">5</text><text transform="translate(989 405) rotate(90)">6</text><text transform="translate(753 598) rotate(90)">4′</text><text transform="translate(888 598) rotate(90)">5′</text><text transform="translate(989 598) rotate(90)">6′</text></g>
        <!-- boreholes -->
        <path d="M736 475.500h43M803 475.500h44M869 439.500h44M972 439.500h42M735 520.500h44M803 520.500h43M871 520.500h43M972 520.500h42M735 572.500h44M803 572.500h43M871 572.500h43M972 572.500h42M943 475.500h19M1010 475.500h20"/>
        <use href="#half" x="757" y="475"/><use href="#water" x="824" y="475"/><use href="#pump" x="892" y="441"/><use href="#half" x="993" y="439"/><use href="#hole" x="757" y="520"/><use href="#tri" x="824" y="520"/><use href="#half" x="892" y="520"/><use href="#tri" x="993" y="520"/><use href="#hole" x="757" y="573"/><use href="#hole" x="824" y="572"/><use href="#vane" x="892" y="572"/><use href="#hole" x="993" y="572"/><use href="#screw" x="937" y="476"/><use href="#plate" x="1004" y="476"/>
        <g class="t lab" text-anchor="middle">
         <text x="744" y="474">zk1</text><text x="744" y="482">35.50</text><text x="771" y="474">30.43</text><text x="771" y="482">15.43</text>
         <text x="811" y="474">zk2</text><text x="811" y="482">29.80</text><text x="839" y="474">29.06</text><text x="839" y="482">24.56</text>
         <text x="878" y="438">zk4</text><text x="878" y="446">37.80</text><text x="906" y="438">30.36</text><text x="906" y="446">15.76</text>
         <text x="979" y="438">zk3</text><text x="979" y="446">32.00</text><text x="1007" y="438">30.95</text><text x="1007" y="446">24.70</text>
         <text x="743" y="519">zk5</text><text x="743" y="527">33.60</text><text x="771" y="519">30.06</text><text x="771" y="527">26.43</text>
         <text x="811" y="519">zk9</text><text x="811" y="527">37.00</text><text x="838" y="519">29.31</text><text x="838" y="527">24.21</text>
         <text x="878" y="519">zk11</text><text x="878" y="527">36.80</text><text x="906" y="519">30.96</text><text x="906" y="527">23.80</text>
         <text x="979" y="519">zk8</text><text x="979" y="527">32.60</text><text x="1007" y="519">30.60</text><text x="1007" y="527">28.80</text>
         <text x="743" y="571">zk6</text><text x="743" y="579">32.60</text><text x="771" y="571">29.87</text><text x="771" y="579">25.47</text>
         <text x="811" y="571">zk10</text><text x="811" y="579">28.00</text><text x="838" y="571">29.80</text><text x="838" y="579">24.70</text>
         <text x="878" y="571">zk7</text><text x="878" y="579">29.60</text><text x="906" y="571">30.95</text><text x="906" y="579">16.95</text>
         <text x="979" y="571">zk12</text><text x="979" y="579">30.80</text><text x="1007" y="571">29.80</text><text x="1007" y="579">25.40</text>
         <text x="953" y="474">zk14</text><text x="953" y="482">30.53</text><text x="1020" y="474">zk23</text><text x="1020" y="482">30.72</text>
        </g>
        <!-- legend -->
        <path d="M1197 364.500h40M1250 364.500h41"/><use href="#vane" x="1217" y="364"/><use href="#vane" x="1270" y="364"/>
        <g class="t lab"><text x="1201" y="363">zk2</text><text x="1197" y="371">35.60</text><text x="1223" y="363">30.95</text><text x="1223" y="371">12.91</text></g>
        <g class="t leg"><text x="1250" y="363" class="xs">孔编</text><text x="1250" y="370" class="xs">孔深</text><text x="1276" y="363" class="xs">高程</text><text x="1276" y="370" class="xs">水位</text></g>
        <path d="M1199.500 379.500h36v18h-36zM1199.500 402.500h36v18h-36zM1199.500 426.500h36v18h-36zM1199.500 450.500h36v18h-36zM1199.500 473.500h36v18h-36zM1199.500 497.500h36v18h-36zM1199.500 520.500h36v18h-36zM1199.500 544.500h36v18h-36zM1199.500 568.500h36v18h-36zM1199.500 591.500h36v18h-36zM1199.500 615.500h36v18h-36zM1199.500 638.500h36v18h-36zM1199.500 662.500h36v18h-36zM1199.500 686.500h36v18h-36zM1216 388.500h13M1216 411.500h13M1257 388.500h24M1257 411.500h24"/>
        <use href="#screw" x="1210" y="389"/><use href="#screw" x="1251" y="389"/><use href="#plate" x="1211" y="412"/><use href="#plate" x="1251" y="412"/><use href="#vane" x="1217" y="435"/><use href="#inject" x="1217" y="461"/><use href="#pump" x="1217" y="484"/><use href="#half" x="1217" y="506"/><use href="#water" x="1217" y="529"/><use href="#hole" x="1217" y="553"/><use href="#tri" x="1217" y="577"/><use href="#screw" x="1217" y="601"/><use href="#plate" x="1217" y="625"/>
        <path d="M1209 647.500h18M1206.500 669.500h13v-2h7v9h-20zM1221 671.500h5M1205 697.500h23M1205 694.500h14"/><path d="M1210 644v7M1225 644v7M1219 667h8M1205 699h23M1216 691h12M1219 694h9" stroke-width="2"/>
        <g class="t lab"><text x="1217" y="387">zk34</text><text x="1216" y="396">30.22</text><text x="1217" y="410">zk23</text><text x="1216" y="419">30.57</text></g>
        <g class="t leg"><text x="1258" y="387" class="xs">试验编号</text><text x="1258" y="395" class="xs">地面高程</text><text x="1258" y="410" class="xs">试验编号</text><text x="1258" y="418" class="xs">地面高程</text>
         <text x="1247" y="438">十字板剪切试验孔</text><text x="1247" y="462">注水试验孔</text><text x="1247" y="486">抽水试验孔</text><text x="1247" y="509">取土标贯钻孔</text><text x="1247" y="532">取土、取水试样钻孔</text><text x="1247" y="556">鉴别孔</text><text x="1247" y="580">静力触探试验孔</text><text x="1247" y="604">螺旋板载荷试验点</text><text x="1247" y="627">平板载荷试验点</text><text x="1247" y="651">地质剖面线及编号</text><text x="1247" y="675">已有建筑物及层数</text><text x="1247" y="699">拟建建筑物及层数</text></g>
        <!-- UCS icon and crosshair -->
        <path d="M51.500 887.500h14v14h-14zM58.500 813v81.500h81.500M58.500 784.500l9 9 9-9M67.500 793v9M151.500 876.500l18 18M169.500 876.500l-18 18"/>
        <path d="M724.500 876v44M676 923.500h96M721 923v-2h6v2"/>
       </g>
      </svg>
      <table class="block">
       <colgroup><col class="a"><col class="a"><col class="a"><col class="a"><col class="a"><col class="b"><col class="c"><col class="a"></colgroup>
       <tr><th>勘察单位</th><td colspan="7">北京理正勘察设计院第六分院</td></tr>
       <tr><th>工程名称</th><td colspan="4">育新小区868号楼</td><th>勘察阶段</th><td colspan="2">详细勘察</td></tr>
       <tr><th>图　名</th><td colspan="3">建筑物和勘探点位置图</td><th>比　例</th><td colspan="3" class="l">1: 1000</td></tr>
       <tr><th>绘　图</th><td></td><th>审　核</th><td></td><th>日　期</th><td></td><th>图　号</th><td>01</td></tr>
      </table>
      <div class="float f1"><i class="fgrip"></i><div><button><svg class="i"><use href="#g1"/></svg></button><button><svg class="i"><use href="#g2"/></svg></button><button><svg class="i"><use href="#g3"/></svg></button><button><svg class="i"><use href="#g4"/></svg></button><button><svg class="i"><use href="#g5"/></svg></button><button><svg class="i"><use href="#g6"/></svg></button><button><svg class="i"><use href="#g7"/></svg></button><button><svg class="i"><use href="#g8"/></svg></button><button><svg class="i"><use href="#g9"/></svg></button><button><svg class="i"><use href="#g10"/></svg></button><button><svg class="i"><use href="#g11"/></svg></button><button><svg class="i"><use href="#g12"/></svg></button></div><button class="x" aria-label="关闭"><svg width="7" height="7"><path d="M1 1l5 5M6 1l-5 5"/></svg></button></div>
      <div class="float f2"><i class="fgrip"></i><div><button><svg class="i"><use href="#g13"/></svg></button><button><svg class="i"><use href="#g14"/></svg></button><button><svg class="i"><use href="#g15"/></svg></button><button><svg class="i"><use href="#g16"/></svg></button><button><svg class="i"><use href="#g17"/></svg></button><button><svg class="i"><use href="#g18"/></svg></button><button><svg class="i"><use href="#g19"/></svg></button><button><svg class="i"><use href="#g20"/></svg></button></div><button class="x" aria-label="关闭"><svg width="7" height="7"><path d="M1 1l5 5M6 1l-5 5"/></svg></button></div>
      <div class="float f3"><i class="fgrip"></i><div><button><svg class="i"><use href="#g21"/></svg></button><button><svg class="i"><use href="#g22"/></svg></button></div><button class="x" aria-label="关闭"><svg width="7" height="7"><path d="M1 1l5 5M6 1l-5 5"/></svg></button></div>
      <div class="float f4"><i class="fgrip"></i><div><button><svg class="i"><use href="#g23"/></svg></button><button><svg class="i"><use href="#g24"/></svg></button></div><button class="x" aria-label="关闭"><svg width="7" height="7"><path d="M1 1l5 5M6 1l-5 5"/></svg></button></div>
     </div>
     <div class="vscroll"><button class="sb up" aria-label="向上"></button><i class="room v1"></i><i class="sb"></i><i class="room v2"></i><button class="sb down" aria-label="向下"></button></div>
    </div>
    <div class="sheets">
     <div class="nav"><button aria-label="首页"><svg width="7" height="8"><path d="M0 0h1v8h-1zM6 0v8l-4-4z"/></svg></button><button aria-label="前页"><svg width="7" height="8"><path d="M5 0v8l-4-4z"/></svg></button><button aria-label="后页"><svg width="7" height="8"><path d="M1 0v8l4-4z"/></svg></button><button aria-label="末页"><svg width="7" height="8"><path d="M6 0h1v8h-1zM0 0v8l4-4z"/></svg></button></div>
     <div class="stabs">
      <svg width="160" height="17" aria-hidden="true"><path d="M136 0h22l-8 16h-13l-5-7zM91 0h47l-8 16h-34l-5-7zM45 0h47l-8 16h-34l-5-7z" fill="#e0e2e6" stroke="#000"/><path d="M0 0l8 16h31l8-16z" fill="#fff" stroke="#000"/><path d="M1 0h45" stroke="#fff"/></svg>
      <button class="on">模型</button><button>布局1</button><button class="s2">布局2</button><button class="plus">+</button>
     </div>
     <div class="hscroll"><i class="split"></i><button class="sb lt" aria-label="向左"></button><i class="room r1"></i><i class="sb"></i><i class="room r2"></i><button class="sb rt" aria-label="向右"></button></div>
    </div>
   </main>
   <div class="dock">
    <div class="vtool"><i class="vgrip"></i><button><svg class="i"><use href="#m1"/></svg></button><button><svg class="i"><use href="#m2"/></svg></button><button><svg class="i"><use href="#m3"/></svg></button><button><svg class="i"><use href="#m4"/></svg></button><button><svg class="i"><use href="#m5"/></svg></button><button><svg class="i"><use href="#m6"/></svg></button><button><svg class="i"><use href="#m7"/></svg></button><button><svg class="i"><use href="#m8"/></svg></button><button><svg class="i"><use href="#m9"/></svg></button><button><svg class="i"><use href="#m10"/></svg></button><button><svg class="i"><use href="#m11"/></svg></button><button><svg class="i"><use href="#m12"/></svg></button><button><svg class="i"><use href="#m13"/></svg></button><button><svg class="i"><use href="#m14"/></svg></button><button><svg class="i"><use href="#m15"/></svg></button><button><svg class="i"><use href="#m16"/></svg></button><button><svg class="i"><use href="#m17"/></svg></button></div>
    <div class="vtool"><i class="vgrip"></i><button><svg class="i"><use href="#o1"/></svg></button><button><svg class="i"><use href="#o2"/></svg></button><button><svg class="i"><use href="#o3"/></svg></button><button><svg class="i"><use href="#o4"/></svg></button><i class="vsep"></i><button><svg class="i"><path d="M3.500 7.500v6h10v-9h-3" fill="#dce8fa" class="b"/><path d="M16 10v6h-6z" fill="#000" stroke="none"/><text x="0" y="6" class="abc">ABC</text></svg></button><button><svg class="i"><use href="#o6"/></svg></button></div>
   </div>
  </div>
  <section class="command" aria-label="命令行">
   <div class="cmdside"><button aria-label="关闭命令行"><svg width="8" height="8"><path d="M.5 .5l7 7M7.500 .5l-7 7"/></svg></button><button aria-label="固定"><svg width="8" height="9"><path d="M2.500 .5h4v5h-4zM0 5.500h8M4 6v3"/></svg></button></div>
   <div class="cmdbody">
    <div class="log"><div><p>命令<b>:</b></p><p>命令<b>:InitParam</b></p></div><div class="vscroll"><button class="sb up" aria-label="向上"></button><i class="room"></i><button class="sb down" aria-label="向下"></button></div></div>
    <div class="entry"><label for="cmd">命令<b>:</b></label><input id="cmd"><div class="mini"><button class="sb lt" aria-label="向左"></button><i class="sb"></i><i class="room"></i><button class="sb rt" aria-label="向右"></button></div></div>
   </div>
   <svg class="ibeam" width="7" height="16" aria-hidden="true"><path d="M0 .5h3M4 .5h3M3.500 1v14M0 15.500h3M4 15.500h3" stroke="#000"/></svg>
  </section>
 </div>

 <aside class="panel">
  <header><h2>CAD功能面板</h2><button aria-label="固定"><svg width="8" height="9"><path d="M2.500 .5h4v5h-4zM0 5.500h8M4 6v3"/></svg></button><button aria-label="关闭"><svg width="8" height="8"><path d="M.5 .5l7 7M7.500 .5l-7 7" stroke-width="2"/></svg></button></header>
  <div class="crumbs"><p>【勘察<b>CAD</b>】</p><p class="cur"><svg width="13" height="7"><path d="M.5 .5h12l-6 6z" fill="none" stroke="#000"/></svg>平面图</p></div>
  <ul>
   <li><svg class="i pic"><use href="#g1"/></svg><a href="#">底图初始化<b>(DT)...</b></a></li>
   <li><a href="#">生成平面图<b>...</b></a></li><li><a href="#">生成平面图网格<b>...</b></a></li><li><a href="#">生成图例<b>...</b></a></li><li><a href="#">批量布置勘探点<b>...</b></a></li><li><a href="#">批量布置剖线<b>...</b></a></li>
  </ul>
  <ul><li class="sub"><a href="#">勘探点、剖线</a></li></ul>
  <ul><li class="sub"><a href="#">地质内容填绘</a></li><li><a href="#">设置勘探点颜色<b>...</b></a></li><li><a href="#">地质内容旋转<b>...</b></a></li><li><a href="#">地质内容删除<b>...</b></a></li></ul>
  <ul><li><svg class="i pic"><use href="#g7"/></svg><a href="#">平面图入库<b>(RK)...</b></a></li></ul>
  <ul><li><svg class="i pic"><use href="#g6"/></svg><a href="#">切地面线<b>...</b></a></li><li><a href="#">增加图纸名称<b>...</b></a></li><li><svg class="i pic"><use href="#g8"/></svg><a href="#">增加指北针<b>...</b></a></li><li><a href="#">炸开自定义实体<b>...</b></a></li><li><a href="#">添加遮盖<b>...</b></a></li><li><a href="#">取消遮盖<b>...</b></a></li><li class="down"><a href="#">布置裁图框<b>...</b></a></li><li><a href="#">裁图<b>...</b></a></li></ul>
  <ul><li><a href="#">勘探点查询<b>...</b></a></li></ul>
  <ul><li><a href="#">生成等高线<b>...</b></a></li></ul>
  <ul><li><a href="#">指定建筑物轮廓线<b>...</b></a></li></ul>
 </aside>
</div>

<footer class="status">
 <output>505043.809, 304830.6136, 0</output>
 <div class="modes"><button><svg class="i"><use href="#s1b"/></svg></button><button><svg class="i"><use href="#s1"/></svg></button><button><svg class="i"><use href="#s2"/></svg></button><button class="on"><svg class="i"><use href="#s3"/></svg></button><button class="on"><svg class="i"><use href="#s4"/></svg></button><button class="on"><svg class="i"><use href="#s5"/></svg></button><button><svg class="i"><use href="#s6"/></svg></button><button class="on"><svg class="i"><use href="#s7"/></svg></button><button><svg class="i"><use href="#s8"/></svg></button><button><svg class="i"><use href="#s9"/></svg></button><button><svg class="i"><use href="#s10"/></svg></button><button class="on"><svg class="i"><use href="#s11"/></svg></button><button class="scale"><svg class="i"><use href="#s12"/></svg>1:1<span class="vee"></span></button><button><svg class="i"><use href="#s13"/></svg></button><button><svg class="i"><use href="#s14"/></svg></button><button class="on"><svg class="i"><use href="#s15"/></svg></button><button class="on"><svg class="i"><use href="#s16"/></svg></button></div>
 <div class="tray"><button><svg class="i"><use href="#t1"/></svg></button><button><svg class="i"><use href="#unlock"/></svg></button><button><svg class="i"><use href="#bulb"/></svg></button><button><svg class="i"><use href="#t4"/></svg></button><button><svg class="i"><use href="#t5"/></svg></button><button><svg class="i"><use href="#t6"/></svg></button><span>GstarCAD</span></div>
</footer>

<div class="ime">
 <svg class="sogou" width="28" height="28" viewBox="0 0 28 28"><path d="M1 5l21-4.500q1 0 1.500 1l4 18q0 2-1 2.500l-19 5q-2 0-2.500-1z" fill="#c84010"/><path d="M0 4l22-4 2 11-22 5z" fill="#d89040"/><path d="M22 8q-3-4-10-2t-6 5 6 3 8 2-5 4-9-1" fill="none" stroke="#fff" stroke-width="5"/></svg>
 <span>中</span>
 <svg width="14" height="14"><path d="M8 0q2 8-8 10 3 4 8 3 6-3 5-8-1-4-5-5z" fill="#1f70c8"/></svg>
 <svg width="14" height="14"><circle cx="3" cy="3" r="2" fill="none" stroke="#1f70c8"/><path d="M8 6h4v3q0 3-3 4l-1-1q2-1 2-2h-2z" fill="#1f70c8"/></svg>
 <svg width="16" height="12"><rect x=".5" y=".5" width="15" height="11" rx="1" fill="#1f70c8"/><path d="M2 3h12M2 6h12M4 9h8" stroke="#fff" stroke-dasharray="2 1"/></svg>
 <svg width="17" height="15"><circle cx="6" cy="3.500" r="3.500" fill="#b8c4dc"/><path d="M0 14q0-6 6-6h4v6z" fill="#b8c4dc"/><path d="M5 9h12v6h-12z" fill="#fff"/><path d="M6 9.500h4v2h-4v2h4M16 9.500h-4v2h4v2h-4" fill="none" stroke="#b8c4dc"/></svg>
 <svg width="14" height="14"><path d="M4 0q3 2 6 0l4 3-2 4-1.500-1v7h-7v-7l-1.500 1-2-4z" fill="#1f70c8"/></svg>
 <svg width="14" height="14"><path d="M13 3l-3 2-2-1v-2l2-2q-4-1-6 2v3l-4 6 2 3 7-6q5 0 5-5z" fill="#1f70c8"/></svg>
</div>
<div class="ball">39</div>
</body>
</html>
```
FILE: styles.css
```css
* { box-sizing: border-box; }
html, body { height: 100%; }
body { margin: 0; display: flex; flex-direction: column; overflow: hidden; position: relative; background: #808080; color: #000; font: 12px/18px "Open Sans", "Noto Sans CJK SC", sans-serif; }
h1, h2, p, ul { margin: 0; padding: 0; font-size: 12px; font-weight: normal; list-style: none; }
a { color: inherit; text-decoration: none; }
button { margin: 0; padding: 0; border: 0; background: none; color: inherit; font: inherit; display: flex; align-items: center; justify-content: center; flex: none; }
svg { display: block; flex: none; }
i { display: block; flex: none; }
.defs { position: absolute; width: 0; height: 0; }
.i { width: 16px; height: 16px; fill: none; stroke: #14386b; overflow: visible; }
.i.dim { opacity: .4; }
.b { stroke: #2a55c8; }

/* title bar */
.titlebar { height: 28px; flex: none; display: flex; align-items: center; padding-right: 4px; background: #ebebeb; border-bottom: 1px solid #9a9a9a; }
.logo { width: 47px; height: 28px; padding: 3px 0 0 5px; flex: none; position: relative; z-index: 2; }
.quick { display: flex; align-items: center; width: 199px; height: 22px; }
.quick button { width: 22px; height: 20px; }
.quick .hot { background: #b9c0d8; border: 1px solid #d0a878; }
.quick .dd { width: 12px; }
.dd::after, .vee::after { content: ""; border: 3px solid transparent; border-top: 3px solid #555; border-bottom: 0; }
.bar .dd { width: 14px; }
.i.sm { width: 17px; height: 12px; }
.scheme { display: flex; width: 124px; height: 22px; border: 2px solid #8c8c8c; background: #ebebeb; }
.scheme select { flex: 1; min-width: 0; padding: 0 1px; }
select { appearance: none; border: 0; margin: 0; background: none; color: #000; font: inherit; outline: 0; opacity: 1; }
.flatdd { width: 13px; background: #b4b4b8; display: flex; align-items: center; justify-content: center; }
.flatdd::after { content: ""; border: 3px solid transparent; border-top-color: #555; border-bottom: 0; }
.more { width: 38px; }
.titlebar h1 { flex: 1; text-align: center; color: #fff; font-weight: 600; padding-right: 16px; }
.winbtns { display: flex; align-items: center; gap: 9px; color: #8a8f98; }
.winbtns svg { stroke: #8a8f98; stroke-width: 2; }
.winbtns button { width: 9px; height: 9px; }
.winbtns .min { border-bottom: 2px solid #8a8f98; height: 7px; }
.winbtns .max { border: 1px solid #8a8f98; border-top-width: 2px; height: 7px; box-shadow: 2px -2px 0 -1px #8a8f98; }

/* menu */
.menubar { height: 22px; flex: none; display: flex; align-items: center; gap: 15px; padding: 0 4px 0 54px; background: #3a4d69; color: #fff; }
.menubar .look { margin-left: auto; display: flex; align-items: center; gap: 4px; }
.vee { display: inline-flex; }
.vee::after { border-top-color: #fff; }

/* toolbars */
.toolbars { height: 49px; flex: none; padding: 0 0 2px; background: #808080; border-top: 1px solid #fff; display: flex; flex-direction: column; gap: 2px; align-items: flex-start; }
.bar { display: flex; align-items: center; height: 22px; padding-right: 2px; background: linear-gradient(#fff, #f2f2f2); font: 10px/16px "Liberation Mono", monospace; }
.bar > button { width: 23px; height: 22px; }
.bar > .w26 { width: 26px; }
.bar > .dd { width: 14px; }
.grip { width: 9px; height: 22px; background: radial-gradient(#fff 1px, transparent 1px) 2px 3px / 3px 3px content-box, #7c8491; padding: 4px 1px 4px 2px; background-clip: content-box, border-box; }
.grip.wide { width: 14px; padding: 4px 4px; }
.sep { width: 8px; height: 20px; background: linear-gradient(#8a8a8a, #8a8a8a) center / 1px 100% no-repeat; }
.sep.wide { width: 11px; }
.combo { display: flex; align-items: center; width: 147px; height: 21px; background: #fff; border: 2px solid; border-color: #505050 #d4d0c8 #d4d0c8 #505050; }
.combo select { flex: 1; min-width: 0; height: 17px; padding: 0 2px; }
.combo.in select { padding-left: 21px; }
.combo.layer { width: 295px; margin: 0 2px 0 1px; padding-left: 3px; }
.combo.layer .i { margin-right: 1px; width: 15px; height: 15px; }
.combo.layer select { padding-left: 5px; }
.combo.color { width: 146px; margin-left: 2px; padding-left: 3px; }
.combo.ltype { width: 176px; }
.combo.off { background: #d4d0c8; }
.combo.off select { color: #808080; }
.combo.off .arrow::after { border-top-color: #808080; }
.sw { width: 12px; height: 12px; background: #000; }
.rule { width: 70px; height: 1px; margin-left: 6px; background: #000; }
.rule.short { width: 40px; }
.arrow, .sb { width: 16px; height: 16px; flex: none; display: flex; align-items: center; justify-content: center; background: #d4d0c8; border: 1px solid; border-color: #f4f2ee #404040 #404040 #f4f2ee; box-shadow: inset -1px -1px #808080, inset 1px 1px #fff; }
.arrow { height: 17px; }
.arrow::after, .down.sb::after { content: ""; border: 4px solid transparent; border-top-color: #000; border-bottom: 0; }
.up.sb::after { content: ""; border: 4px solid transparent; border-bottom-color: #000; border-top: 0; }
.lt.sb::after { content: ""; border: 4px solid transparent; border-right-color: #000; border-left: 0; }
.rt.sb::after { content: ""; border: 4px solid transparent; border-left-color: #000; border-right: 0; }
.room { flex: 1; background: repeating-conic-gradient(#d4d0c8 0 25%, #fff 0 50%) 0 0 / 2px 2px; }
.room.v1 { flex: 385; }
.room.v2 { flex: 370; }

/* workspace */
.workspace { flex: 1; min-height: 0; display: flex; }
.left { flex: 1; min-width: 0; display: flex; flex-direction: column; border-right: 4px solid #32394d; }
.stage { flex: 1; min-height: 0; display: flex; background: #808080; }
.vtool { width: 23px; align-self: flex-start; display: flex; flex-direction: column; align-items: center; background: linear-gradient(90deg, #e6e6e8, #fbfbfb); padding-bottom: 1px; }
.vtool.draw { margin-right: 1px; }
.vtool button { width: 22px; height: 22px; }
.vgrip { width: 23px; height: 10px; padding: 3px 4px; background: radial-gradient(#fff 1px, transparent 1px) 0 0 / 3px 3px content-box, #7c8491; background-clip: content-box, border-box; }
.vsep { width: 19px; height: 1px; margin: 4px 0 3px; background: #8a8a8a; }
.dock { display: flex; gap: 2px; width: 49px; flex: none; }
.dock .vtool { padding-bottom: 0; }
.abc { font: bold 6px "Liberation Mono", monospace; fill: #14386b; stroke: none; }

.doc { flex: 1; min-width: 0; display: flex; flex-direction: column; padding: 0 3px 3px 2px; background: #eef0f5; border-right: 1px solid #a0a0a0; }
.tabbar { height: 20px; flex: none; margin: 0 -3px 2px 0; padding: 0 10px 0 3px; display: flex; align-items: center; background: linear-gradient(#979eaa, #cfd2d8); }
.tri svg { fill: none; stroke: #5a6070; }
.tri.end { margin-left: auto; }
.tab { display: flex; align-items: center; justify-content: space-between; width: 117px; height: 17px; margin: 3px 0 0 5px; padding: 0 6px 0 11px; background: linear-gradient(#fff3a0, #ffe06a); clip-path: polygon(6px 0, 108px 0, 117px 100%, 0 100%); font-size: 11px; font-weight: bold; }
.tab svg { stroke: #555; }
.view { flex: 1; min-height: 0; display: flex; border: solid; border-width: 2px 0 2px 2px; border-color: #000 #000 #dcd8d0 #000; }
.canvas { flex: 1; min-width: 0; position: relative; overflow: hidden; background: #fff; }
.model { width: 100%; height: 100%; }
.vscroll { width: 17px; display: flex; flex-direction: column; border-right: 1px solid #d4d0c8; }

.t text { fill: #000; stroke: none; font-family: "Liberation Serif", "Noto Sans CJK SC", sans-serif; font-weight: bold; }
.h1 { font-size: 17px; }
.h2 { font-size: 9px; }
.h3 { font-size: 12px; }
.n { font-size: 8px; }
.coord text, .lab text { font-size: 7px; }
.sec text { fill: #0f0; font-size: 14px; }
.leg text { font-size: 7px; }
.leg .xs { font-size: 6px; }

.block { position: absolute; left: 1152px; top: 615px; width: 361px; table-layout: fixed; border-collapse: collapse; font: 9px/15px "Liberation Mono", "Noto Sans CJK SC", monospace; text-align: center; }
.block th, .block td { height: 18px; padding: 2px 0 0; border: 1px solid #000; font-weight: normal; white-space: pre; }
.block .l { text-align: left; padding-left: 7px; }
col.a { width: 45px; }
col.b { width: 51px; }
col.c { width: 38px; }

.float { position: absolute; left: 100px; display: flex; height: 26px; padding: 2px 1px 2px 0; background: #7c8491; }
.float > div { display: flex; height: 22px; background: linear-gradient(#fff, #f0f0f0); border: 1px solid #a0a0a0; }
.float > div button { width: 23px; }
.fgrip { width: 10px; padding: 2px 2px; background: radial-gradient(#fff 1px, transparent 1px) 0 0 / 3px 3px content-box; }
.float .x { width: 7px; height: 8px; margin: 1px 0 0 2px; }
.x svg { stroke: #fff; stroke-width: 2; }
.f1 { top: 30px; }
.f2 { top: 60px; }
.f3 { top: 90px; }
.f4 { top: 120px; }

.sheets { height: 18px; flex: none; display: flex; background: #a4abb4; border-top: 1px solid #222; }
.nav { display: flex; width: 68px; align-items: center; }
.nav button { width: 16px; height: 16px; }
.nav svg { fill: #fff; }
.stabs { display: flex; position: relative; width: 160px; height: 17px; }
.stabs svg { position: absolute; left: 0; top: 0; }
.stabs button { position: relative; width: 42px; color: #666; height: 14px; }
.stabs .on { color: #000; font-weight: bold; width: 43px; }
.stabs .s2 { width: 51px; }
.stabs .plus { width: 16px; }
.hscroll { margin-left: auto; width: 49.500%; display: flex; align-items: stretch; padding: 0 19px 2px 0; }
.hscroll .sb { height: 15px; }
.split { width: 3px; margin-right: 1px; background: #d4d0c8; border-left: 1px solid #fff; }
.r1 { flex: 329; }
.r2 { flex: 407; }

/* command line */
.command { height: 65px; flex: none; position: relative; display: flex; border-top: 4px solid #2e3545; background: #3a4d69; }
.cmdside { width: 19px; display: flex; flex-direction: column; align-items: center; padding-top: 6px; gap: 9px; }
.cmdside svg, .panel header svg { stroke: #fff; fill: none; }
.cmdbody { flex: 1; display: flex; flex-direction: column; background: #fff; border: solid; border-width: 2px 1px 2px 1px; border-color: #606060 #d4d0c8 #d4d0c8 #606060; font: 14px/18px "Noto Sans CJK SC", sans-serif; }
.cmdbody b { font: 12px/14px "Liberation Mono", monospace; }
.cmdbody p { height: 18px; font-size: 14px; }
.log { flex: 1; display: flex; min-height: 0; }
.log > div:first-child { flex: 1; padding: 0 3px; }
.entry { display: flex; align-items: center; height: 19px; padding-left: 3px; border-top: 1px solid #808080; }
.entry input { flex: 1; border: 0; outline: 0; font: inherit; height: 17px; }
.mini { display: flex; width: 80px; margin-right: 17px; }
.ibeam { position: absolute; left: 812px; top: 26px; }

/* panel */
.panel { width: 207px; flex: none; background: #f0f0f0; font: 12px/18px "Noto Sans CJK SC", sans-serif; }
.panel b { font: 10px/14px "Liberation Mono", monospace; }
.panel header { display: flex; align-items: center; height: 20px; padding: 1px 6px 0 4px; gap: 9px; background: #3a4d69; border-bottom: 1px solid #2e3545; color: #fff; font-family: "Open Sans", "Noto Sans CJK SC", sans-serif; }
.panel h2 { flex: 1; }
.crumbs { height: 42px; padding: 0 0 0 4px; border-bottom: 1px solid #000; margin: 0 0 1px 1px; }
.crumbs p { height: 18px; }
.cur { display: flex; align-items: center; gap: 4px; }
.panel ul { padding-bottom: 3px; margin-bottom: 3px; border-bottom: 1px solid #c8c8c8; }
.panel ul:last-child { border: 0; }
.panel li { position: relative; height: 18px; padding-left: 21px; white-space: nowrap; display: flex; align-items: center; }
.panel .pic { width: 16px; height: 16px; margin: 0 3px 0 -19px; background: #c0c0c0; }
.panel .sub::before { content: ""; border: 6px solid transparent; border-left-color: #000; border-right: 0; margin: 0 12px 0 -18px; }
.panel .down { width: 142px; padding-left: 19px; margin-left: 1px; border: 1px solid; border-color: #404040 #e0e0e0 #e0e0e0 #404040; }

/* status bar */
.status { height: 27px; flex: none; display: flex; background: #8c9198; border-bottom: 3px solid #d8d4cc; color: #fff; }
.status output { width: 261px; padding: 3px; font-size: 11px; }
.modes { display: flex; align-items: center; gap: 2px; flex: 1; }
.modes button { width: 20px; height: 20px; border: 1px solid transparent; }
.modes .on { background: #b4b9d0; border-color: #d0a878; }
.modes .scale { width: 44px; gap: 2px; }
.tray { display: flex; align-items: center; width: 195px; padding-left: 7px; background: #eff2f7; color: #222; }
.tray button { width: 22px; height: 16px; border-right: 1px solid #a0a0a0; }
.tray span { padding-left: 4px; font-size: 11px; }

/* desktop overlays */
.ime { position: absolute; right: 0; top: 838px; width: 180px; height: 24px; display: flex; align-items: center; gap: 7px; padding-left: 28px; background: #fafbfd; border: 1px solid #b4bcdc; color: #1f70c8; font: bold 14px/22px "Noto Sans CJK SC", sans-serif; }
.ime .sogou { position: absolute; left: -6px; top: -4px; }
.ball { position: absolute; right: 0; top: 713px; width: 19px; height: 48px; overflow: hidden; border: 3px solid #e0e0e0; border-right: 0; border-radius: 24px 0 0 24px; background: #4fb25c; color: #fff; font: bold 12px/40px "Noto Sans", sans-serif; padding-left: 2px; box-shadow: -1px 2px 4px #999; }
```
